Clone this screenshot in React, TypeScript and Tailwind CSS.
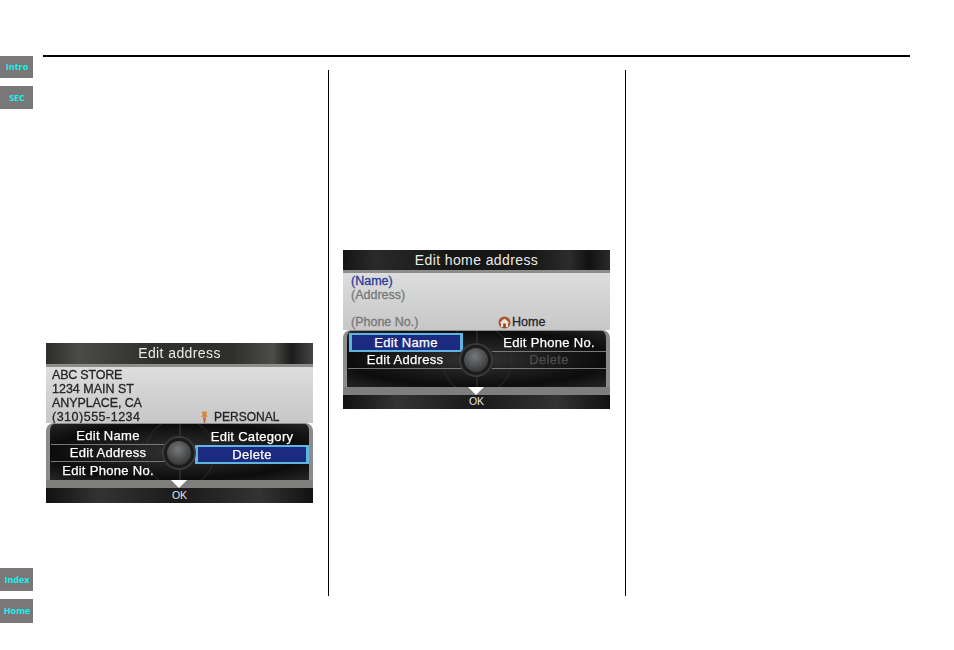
import type { ReactNode } from "react";

const Tab = ({ label, height }: { label: string; height: string }) => (
  <div className={`${height} flex w-[33px] items-center justify-center bg-[#797777] pl-[1px] font-['Open_Sans',sans-serif] text-[9px] font-bold text-[#1cf0ee]`}>
    {label}
  </div>
);

const PinIcon = () => (
  <svg width="7" height="13" viewBox="0 0 7 13" className="shrink-0">
    <path d="M1 0.5h5l-0.6 3 1.2 2.5h-6.2l1.2-2.5z" fill="#d9853c" />
    <path d="M2 6.5h3l-1 6h-1z" fill="#b8683a" />
  </svg>
);

const HomeIcon = () => (
  <svg width="13" height="13" viewBox="0 0 13 13" className="shrink-0">
    <circle cx="6.5" cy="6.5" r="6" fill="#a9562f" />
    <path d="M6.5 2.5l4.5 4-1 .6v4h-7v-4l-1-.6z" fill="#ece6da" />
    <rect x="5.2" y="7.5" width="2.6" height="3.7" fill="#7a4a2a" />
  </svg>
);

type Item = { label: string; selected?: boolean; disabled?: boolean };

const MenuCell = ({ item, line, first }: { item?: Item; line: boolean; first: boolean }) => {
  if (item?.selected) {
    return (
      <div className={`flex h-[19px] items-center justify-center border-y-2 border-x-[3px] border-[#5fb4e0] bg-[#1c2a80] text-white ${first ? "-mt-[2px] translate-x-[1px]" : ""}`}>
        {item.label}
      </div>
    );
  }
  return (
    <div
      className={`flex h-[17px] items-center justify-center ${line ? "border-b border-[#77777c]" : ""} ${item?.disabled ? "text-[#4d4d50]" : "text-white"}`}
    >
      {item?.label}
    </div>
  );
};

const Screen = ({
  title,
  info,
  left,
  right,
  infoHeight,
  titleHeight,
  height,
  titleBg,
}: {
  title: string;
  info: ReactNode;
  left: Item[];
  right: Item[];
  infoHeight: string;
  titleHeight: string;
  height: string;
  titleBg: string;
}) => (
  <div className={`${height} flex w-[267px] flex-col font-['Liberation_Sans',sans-serif] blur-[0.35px]`}>
    <div
      className={`${titleHeight} ${titleBg} flex shrink-0 items-center justify-center border-b-[3px] border-[#8d8d8b] text-[14px] tracking-[0.4px] text-[#ecebe6]`}
    >
      {title}
    </div>
    <div className={`${infoHeight} shrink-0 bg-[linear-gradient(180deg,#dcdddc,#c6c7c6)] text-[12.5px] leading-[14px] [-webkit-text-stroke:0.3px_currentColor]`}>
      {info}
    </div>
    {/* dial menu */}
    <div className="relative flex h-[57px] shrink-0 items-start overflow-hidden rounded-t-[8px] border-x-[4px] border-t-[1px] border-[#8c8c8c] bg-[radial-gradient(ellipse_at_center,#333,#0c0c0c_70%,#262626)] pt-[4px] text-[13px] tracking-[0.3px] [-webkit-text-stroke:0.25px_currentColor]">
      <div className="absolute left-1/2 top-[-6px] h-[70px] w-[70px] -translate-x-1/2 rounded-full border border-[#2e2e30]" />
      <div className="absolute bottom-0 left-1/2 top-0 w-px -translate-x-1/2 bg-[#3a3a3c]" />
      <div className="relative ml-[1px] flex w-[114px] flex-col">
        {[0, 1, 2].map((i) => (
          <MenuCell key={i} item={left[i]} line={i < 2} first={i === 0} />
        ))}
      </div>
      <div className="w-[30px]" />
      <div className="relative flex w-[114px] flex-col">
        {[0, 1, 2].map((i) => (
          <MenuCell key={i} item={right[i]} line={i < 2 && !right[i]?.selected && !right[i + 1]?.selected} first={i === 0} />
        ))}
      </div>
      <div className="absolute left-[calc(50%-1px)] top-[14px] h-[30px] w-[30px] -translate-x-1/2 rounded-full border-[3px] border-[#1c1c1c] bg-[radial-gradient(circle_at_45%_35%,#77787a,#37383a_75%)] shadow-[0_0_0_2px_#3a3a3a]" />
    </div>
    {/* OK strip */}
    <div className="relative flex min-h-0 grow flex-col">
      <div className="h-[8px] bg-[#7e7e7c]" />
      <div className="flex grow items-end justify-center bg-[linear-gradient(90deg,#111,#333_20%,#1a1a1a_50%,#333_80%,#111)] pb-[2px] text-[10.5px] leading-[11px] text-[#e4e4e0]">
        OK
      </div>
      <div className="absolute left-[calc(50%-1px)] top-0 h-0 w-0 -translate-x-1/2 border-x-[8px] border-t-[8px] border-x-transparent border-t-white" />
    </div>
  </div>
);

export default function App() {
  return (
    <div className="flex h-[650px] w-[954px] overflow-hidden bg-white">
      <div className="flex w-[33px] shrink-0 flex-col pb-[27px] pt-[56px]">
        <Tab label="Intro" height="h-[22px]" />
        <div className="mt-[8px]">
          <Tab label="SEC" height="h-[23px]" />
        </div>
        <div className="mt-auto">
          <Tab label="Index" height="h-[23px]" />
        </div>
        <div className="mt-[8px]">
          <Tab label="Home" height="h-[24px]" />
        </div>
      </div>
      <div className="ml-[10px] w-[867px] pt-[55px]">
        <div className="h-[2px] bg-black" />
        <div className="mt-[13px] flex h-[526px]">
          <div className="w-[286px] border-r border-black pl-[3px] pt-[273px]">
            <Screen
              title="Edit address"
              height="h-[160px]"
              titleHeight="h-[24px]"
              infoHeight="h-[56px]"
              titleBg="bg-[linear-gradient(90deg,#2c2c2a,#4a4a46_12%,#2f2f2d_40%,#2f2f2d_70%,#4c4c48_85%,#1c1c1c_92%,#444_100%)]"
              left={[{ label: "Edit Name" }, { label: "Edit Address" }, { label: "Edit Phone No." }]}
              right={[{ label: "Edit Category" }, { label: "Delete", selected: true }]}
              info={
                <div className="flex h-full flex-col pl-[6px] pt-[1px] text-[#26262a]">
                  <div className="tracking-[-0.2px]">ABC STORE</div>
                  <div>1234 MAIN ST</div>
                  <div className="tracking-[-0.1px]">ANYPLACE, CA</div>
                  <div className="flex items-center">
                    <span className="w-[149px] tracking-[0.5px]">(310)555-1234</span>
                    <PinIcon />
                    <span className="ml-[6px] text-[12px]">PERSONAL</span>
                  </div>
                </div>
              }
            />
          </div>
          <div className="w-[297px] border-r border-black pl-[14px] pt-[180px]">
            <Screen
              title="Edit home address"
              height="h-[159px]"
              titleHeight="h-[23px]"
              infoHeight="h-[57px]"
              titleBg="bg-[linear-gradient(90deg,#141414,#2a2a2a_12%,#161616_40%,#161616_70%,#2c2c2c_85%,#111_92%,#2a2a2a_100%)]"
              left={[{ label: "Edit Name", selected: true }, { label: "Edit Address" }]}
              right={[{ label: "Edit Phone No." }, { label: "Delete", disabled: true }]}
              info={
                <div className="flex h-full flex-col pl-[8px] pt-[1px] text-[#77777a]">
                  <div className="text-[#2a3a96]">(Name)</div>
                  <div>(Address)</div>
                  <div className="mt-auto flex items-center pb-[1px]">
                    <span className="w-[147px]">(Phone No.)</span>
                    <HomeIcon />
                    <span className="ml-[1px] text-[#26262a]">Home</span>
                  </div>
                </div>
              }
            />
          </div>
        </div>
      </div>
    </div>
  );
}
